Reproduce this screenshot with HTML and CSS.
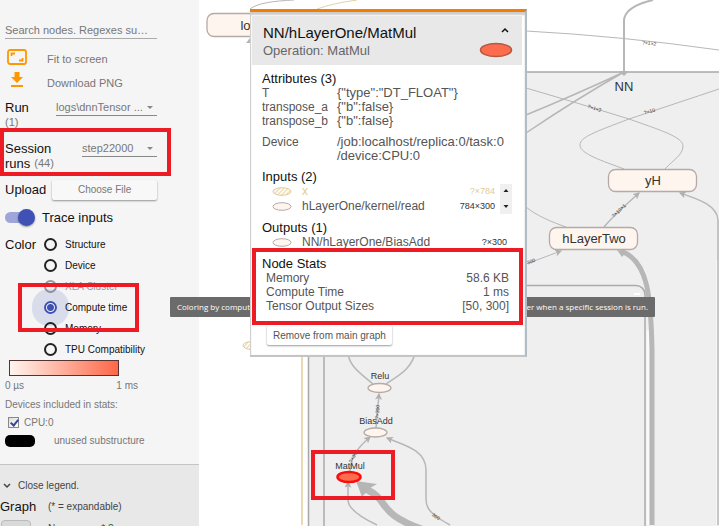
FILE: index.html
```html
<!DOCTYPE html>
<html lang="en">
<head>
<meta charset="utf-8">
<title>Graph explorer</title>
<link rel="stylesheet" href="styles.css">
</head>
<body>
<div class="app">
  <aside class="sidebar">
    <div class="controls">
      <input class="search" type="text" aria-label="Search nodes" placeholder="Search nodes. Regexes su…">
      <button class="action" type="button">
        <svg class="action-icon" viewBox="0 0 20 18" aria-hidden="true"><rect x="1" y="2" width="18" height="14" rx="2" fill="none" stroke="#ff9800" stroke-width="1.8"/><path d="M4.500 8V5.500H8M15.500 10V12.500H12" fill="none" stroke="#ff9800" stroke-width="1.800"/></svg>
        <span>Fit to screen</span>
      </button>
      <button class="action" type="button">
        <svg class="action-icon" viewBox="0 0 20 18" aria-hidden="true"><path d="M7.500 0h5v5h3.500l-6 6-6-6h3.500zM4 13h12v2H4z" fill="#ff9800"/></svg>
        <span>Download PNG</span>
      </button>
      <div class="pickers">
        <div class="picker">
          <label for="run"><span>Run</span><small>(1)</small></label>
          <span class="drop wide"><select id="run"><option>logs\dnnTensor ...</option></select></span>
        </div>
        <div class="picker">
          <label for="session"><span>Session</span><span class="second"><span>runs</span><small>(44)</small></span></label>
          <span class="drop"><select id="session"><option>step22000</option></select></span>
        </div>
      </div>
      <div class="upload"><span>Upload</span><button class="raised" type="button">Choose File</button></div>
      <label class="trace"><input class="toggle" type="checkbox" checked><span>Trace inputs</span></label>
      <div class="color">
        <span class="color-label">Color</span>
        <div class="radios">
          <label><input type="radio" name="color">Structure</label>
          <label><input type="radio" name="color">Device</label>
          <label class="off"><input type="radio" name="color" disabled>XLA Cluster</label>
          <label><input type="radio" name="color" checked>Compute time</label>
          <label><input type="radio" name="color">Memory</label>
          <label><input type="radio" name="color">TPU Compatibility</label>
        </div>
      </div>
      <div class="gradient"></div>
      <div class="scale"><span>0 µs</span><span>1 ms</span></div>
      <div class="devices">Devices included in stats:</div>
      <label class="device"><input type="checkbox" checked>CPU:0</label>
      <div class="unused"><i></i><span>unused substructure</span></div>
    </div>
    <div class="legend">
      <button class="close" type="button"><svg width="8" height="6" viewBox="0 0 8 6" aria-hidden="true"><path d="M1 1l3 3 3-3" fill="none" stroke="#444" stroke-width="1.500"/></svg>Close legend.</button>
      <div class="legend-row"><b>Graph</b><span>(* = expandable)</span></div>
      <div class="legend-row item"><i></i><span>Namespace* <a href="#help">?</a></span></div>
    </div>
  </aside>
  <main class="graph">
    <svg class="canvas" role="img" aria-label="Computation graph">
      <defs>
        <marker id="tip" viewBox="0 0 6 6" refX="5" refY="3" markerWidth="7" markerHeight="7" markerUnits="userSpaceOnUse" orient="auto"><path d="M0 0l6 3-6 3 1.500-3z" fill="#b0b0b0"/></marker>
        <pattern id="hatch" width="3" height="3" patternUnits="userSpaceOnUse" patternTransform="rotate(45)"><rect width="3" height="3" fill="#fffaf0"/><path d="M0 0v3" stroke="#dfcb9b" stroke-width="1.500"/></pattern>
      </defs>
      <g transform="translate(-199 0)">
        <rect x="308.500" y="72" width="412" height="480" fill="#efefef" stroke="#a8a8a8" stroke-width="1.500"/>
        <rect x="324" y="285.500" width="321" height="260" rx="9" fill="#efefef" stroke="#aaa" stroke-width="1.500"/>
        <path d="M648 330V525M717.500 260V525" stroke="#fafafa" stroke-width="2.500"/>
        <path d="M634 294h6" stroke="#fff" stroke-width="2"/>
        <path d="M302 350V525" stroke="#e5cd9c" stroke-width="1.500"/>
        <g fill="none" stroke="#b7b7b7" stroke-width="1">
          <path d="M250 9C258 3 273 1 294 0"/>
          <path d="M317 9Q334 3 357 0" stroke="#e2d2a8"/>
          <path d="M526 31Q620 36 719 50"/>
          <path d="M526 88Q578 103 629 119C660 130 683 137 683 146C683 155 673 160 665 169"/>
          <path d="M719 89Q680 102 629 119C595 132 580 137 580 145C580 154 603 161 624 169"/>
          <path d="M526 207C537 216 552 222 566 227"/>
          <path d="M526 264L561 251" marker-end="url(#tip)"/>
          <path d="M604 227Q613 216 639 193" stroke-width="1.500" marker-end="url(#tip)"/>
          <path d="M718 525V220C717 204 694 198 680 193" stroke-width="1.500" marker-end="url(#tip)"/>
          <path d="M526 115Q577 94 624 72M526 133Q578 98 624 72" stroke-width="1.500"/>
          <path d="M653 0C636 4 624 11 624 21V73" stroke-width="2"/>
          <path d="M652 525V350C651 300 649 261 621 251" stroke-width="5"/>
          <path d="M348 350C347 366 363 375 373 384M416 350C412 370 397 376 386 384" stroke-width="1.500"/>
          <path d="M376 428L379 394" stroke-width="1.500" marker-end="url(#tip)"/>
          <path d="M350 471C351 454 361 445 370 437" stroke-width="1.500" marker-end="url(#tip)"/>
          <path d="M450 525Q441 520 437 517C428 510 426 506 426 499V470C426 450 404 445 387 438" stroke-width="1.500" marker-end="url(#tip)"/>
          <path d="M377 525C358 516 348 508 348 500V482" stroke-width="1.500" marker-end="url(#tip)"/>
          <path d="M424 530C374 512 392 502 366 489" stroke-width="7"/>
        </g>
        <path d="M356 481L377 484L370 488L362 497ZM617 250L627 251L622 257ZM246 43L250 38V43ZM619 71h10l-5 5z" fill="#b5b5b5"/>
        <g fill="#fff5ef" stroke="#b5aaa6" stroke-width="1.300">
          <rect x="207" y="13.500" width="89" height="23" rx="7"/>
          <rect x="608.500" y="169.500" width="88" height="22" rx="7"/>
          <rect x="549.500" y="227.500" width="88" height="22" rx="7"/>
          <ellipse cx="379.500" cy="388" rx="11.500" ry="4.500"/>
          <ellipse cx="375.500" cy="432.500" rx="11.500" ry="4.500"/>
        </g>
        <ellipse cx="252" cy="345.500" rx="9" ry="4" fill="url(#hatch)" stroke="#dfcb9b"/>
        <ellipse cx="349" cy="477" rx="11.500" ry="5" fill="#fc6d4d" stroke="#fa0d0d" stroke-width="2.500"/>
        <g class="name"><text x="252" y="30">loss</text><text x="624" y="91">NN</text><text x="653" y="185">yH</text><text x="594" y="243">hLayerTwo</text></g>
        <g class="op"><text x="380" y="379">Relu</text><text x="376" y="424">BiasAdd</text><text x="350" y="469">MatMul</text></g>
        <g class="size">
          <text transform="translate(649 45) rotate(7)">?×1×2</text>
          <text transform="translate(594 110) rotate(18)">?×1×2</text>
          <text transform="translate(650 113) rotate(-16)">?×10</text>
          <text transform="translate(620 212) rotate(-43)">?×10×1</text>
          <text transform="translate(529 264) rotate(-20)">?×300</text>
          <text transform="translate(379 412) rotate(-85)">?×300</text>
          <text transform="translate(355 457) rotate(-62)">?×300</text>
          <text transform="translate(435 518) rotate(35)">300</text>
        </g>
      </g>
    </svg>
  </main>

  <div class="tooltip" role="tooltip"><span>Coloring by comput</span><span>er when a specific session is run.</span></div>

  <section class="card">
    <header class="card-head">
      <div><h1>NN/hLayerOne/MatMul</h1><p>Operation: MatMul</p></div>
      <div class="head-side">
        <button class="collapse" type="button" aria-label="Collapse"><svg width="10" height="7" viewBox="0 0 10 7"><path d="M2 5l3-3 3 3" fill="none" stroke="#111" stroke-width="1.500"/></svg></button>
        <svg width="34" height="16" viewBox="0 0 34 16" aria-hidden="true"><ellipse cx="17" cy="8" rx="15.500" ry="6.500" fill="#fd6c4c" stroke="#b75743" stroke-width="1.500"/></svg>
      </div>
    </header>
    <div class="card-body">
      <h2>Attributes (3)</h2>
      <dl class="attrs">
        <dt>T</dt><dd>{"type":"DT_FLOAT"}</dd>
        <dt>transpose_a</dt><dd>{"b":false}</dd>
        <dt>transpose_b</dt><dd>{"b":false}</dd>
      </dl>
      <dl class="attrs device-attr"><dt>Device</dt><dd>/job:localhost/replica:0/task:0<wbr>/device:CPU:0</dd></dl>
      <h2>Inputs (2)</h2>
      <div class="inputs">
        <ul>
          <li class="faded"><svg width="20" height="9" viewBox="0 0 20 9"><ellipse cx="10" cy="4.500" rx="9" ry="3.800" fill="url(#hatch)" stroke="#dfcb9b"/></svg><span>x</span><small>?×784</small></li>
          <li><svg width="20" height="9" viewBox="0 0 20 9"><ellipse cx="10" cy="4.500" rx="9" ry="3.800" fill="#fff5ef" stroke="#b5aaa6"/></svg><span>hLayerOne/kernel/read</span><small>784×300</small></li>
        </ul>
        <div class="scroller" aria-hidden="true"><svg width="12" height="29" viewBox="0 0 12 29"><path d="M3.500 8L6 5l2.500 3zM3.500 21h5L6 24z" fill="#222"/></svg></div>
      </div>
      <h2 class="next">Outputs (1)</h2>
      <ul>
        <li><svg width="20" height="9" viewBox="0 0 20 9"><ellipse cx="10" cy="4.500" rx="9" ry="3.800" fill="#fff5ef" stroke="#b5aaa6"/></svg><span>NN/hLayerOne/BiasAdd</span><small>?×300</small></li>
      </ul>
      <h2 class="next">Node Stats</h2>
      <table class="stats">
        <tr><th>Memory</th><td>58.6 KB</td></tr>
        <tr><th>Compute Time</th><td>1 ms</td></tr>
        <tr><th>Tensor Output Sizes</th><td>[50, 300]</td></tr>
      </table>
      <button class="raised remove" type="button">Remove from main graph</button>
    </div>
  </section>

  <div class="mark mark-session"></div>
  <div class="mark mark-compute"></div>
  <div class="mark mark-stats"></div>
  <div class="mark mark-node"></div>
</div>
</body>
</html>
```
FILE: styles.css
```css
* { box-sizing: border-box; }
body { margin: 0; background: #fff; color: #111; font: 13px/15px "Liberation Sans", Arial, sans-serif; }
h1, h2, p, dl, dd, ul { margin: 0; padding: 0; font-weight: normal; }
button, input, select { font: inherit; color: inherit; margin: 0; }
button { border: 0; padding: 0; background: none; text-align: left; }
svg { flex: none; display: block; }

.app { position: relative; display: flex; height: calc(100vh - 4px); margin-right: 5px; overflow: hidden; }

.sidebar { flex: none; width: 199px; background: #f5f5f5; overflow: hidden; }
.controls { padding: 20px 42px 16px 5px; }
.search { display: block; width: 100%; height: 19px; margin-bottom: 9px; padding: 2px 0 0; border: 0; border-bottom: 1px solid #aaa; background: none; font-size: 11px; text-overflow: ellipsis; }
.search::placeholder { color: #777; opacity: 1; }
.action { display: flex; gap: 20px; width: 100%; height: 24px; color: #777; font-size: 11px; }
.action-icon { width: 20px; height: 18px; margin-left: 2px; }
.action span { padding-top: 4px; }

.pickers { display: flex; flex-direction: column; gap: 11px; margin-top: 4px; }
.picker { display: flex; justify-content: space-between; height: 30px; }
.picker label { display: flex; flex-direction: column; }
.second { display: flex; gap: 4px; }
.picker small { font-size: 11px; color: #777; }
.drop { position: relative; width: 75px; height: 16px; border-bottom: 1px solid #888; }
.drop.wide { width: 101px; }
.drop::after { content: ""; position: absolute; right: 4px; top: 6px; border: 3px solid transparent; border-top-color: #888; border-bottom: 0; }
.drop select { appearance: none; display: block; width: 100%; height: 15px; padding: 0; border: 0; background: none; font-size: 11px; color: #777; }

.upload { display: flex; align-items: center; gap: 6px; height: 21px; margin-top: 8px; }
.raised { height: 20px; background: #f8f8f8; border-radius: 2px; box-shadow: 0 1px 2px rgba(0,0,0,.4); color: #777; font-size: 10px; text-align: center; }
.upload .raised { flex: 1; }
.trace { display: flex; align-items: center; gap: 8px; height: 20px; margin-top: 7px; }
.toggle { appearance: none; position: relative; width: 29px; height: 11px; border-radius: 6px; background: #9ea6d9; }
.toggle::after { content: ""; position: absolute; right: -1px; top: -3px; width: 17px; height: 17px; border-radius: 50%; background: #3f51b5; box-shadow: 0 1px 2px rgba(0,0,0,.4); }

.color { display: flex; margin-top: 7px; }
.color-label { width: 39px; line-height: 21px; }
.radios label { display: flex; align-items: center; gap: 8px; height: 21px; font-size: 10px; white-space: nowrap; }
.radios .off { color: #999; }
.radios input { appearance: none; flex: none; width: 13px; height: 13px; border: 2px solid #222; border-radius: 50%; }
.radios .off input { border-color: #999; }
.radios input:checked { border-color: #3f51b5; background: radial-gradient(circle, #3f51b5 3px, transparent 4px); box-shadow: 0 0 0 12px rgba(63,81,181,.15); }

.gradient { width: 110px; height: 16px; margin-left: 4px; border: 1px solid #533; background: linear-gradient(to right, #fff5ef, #fd6747); }
.scale, .devices, .device, .unused { color: #777; font-size: 10px; }
.scale { display: flex; justify-content: space-between; width: 133px; margin-top: 2px; }
.devices { margin-top: 4px; }
.device { display: flex; align-items: center; gap: 5px; margin: 3px 0 3px 3px; }
.device input { appearance: none; width: 11px; height: 11px; border: 1px solid #888; background: linear-gradient(135deg, #ddd, #fff); position: relative; }
.device input::after { content: ""; position: absolute; left: 3px; top: 0; width: 3px; height: 6px; border: solid #34469b; border-width: 0 2px 2px 0; transform: rotate(40deg); }
.unused { display: flex; align-items: center; gap: 19px; height: 15px; }
.unused i { width: 30px; height: 12px; border-radius: 5px; background: #000; }

.legend { height: 80px; padding-top: 13px; border-top: 1px solid #c4c4c4; background: #e8e8e8; font-size: 10px; color: #444; }
.close { display: flex; align-items: center; gap: 7px; padding-left: 3px; }
.legend-row { display: flex; align-items: center; gap: 12px; margin-top: 6px; }
.legend-row b { width: 36px; font-size: 13px; font-weight: normal; color: #111; }
.legend-row i { width: 30px; height: 16px; margin-left: 1px; border: 1px solid #bbb; border-radius: 4px; background: #d9d9d9; }
.item { gap: 17px; }
.item a { color: #2a7a2a; text-decoration: none; }

.graph { flex: 1; min-width: 0; background: #fff; }
.canvas { width: 100%; height: 100%; }
.canvas text { text-anchor: middle; fill: #333; }
.name { font-size: 13px; }
.op { font-size: 9px; }
.size { font-size: 5px; }

.tooltip { position: absolute; left: 170px; top: 297px; width: 485px; height: 20px; padding: 0 7px; display: flex; justify-content: space-between; align-items: center; border-radius: 1px; background: #6b6b6b; color: #fff; font: 8px/12px "Open Sans", sans-serif; }

.card { position: absolute; left: 250px; top: 9px; width: 277px; padding: 0 3px 10px 2px; border-top: 3px solid #f57c00; border-right: 2px solid #b0bcc6; border-bottom: 2px solid #c4c4c4; background: #fff; box-shadow: inset 0 3px 2px #ccc, inset 1px 0 1px #ccc; }
.card-head { display: flex; justify-content: space-between; height: 49px; margin-top: 4px; padding: 8px 9px 0 11px; background: #e8e8e8; }
.card-head h1 { font-size: 15px; line-height: 18px; }
.card-head p { line-height: 17px; color: #666; }
.head-side { display: flex; flex-direction: column; align-items: flex-end; gap: 8px; padding-top: 3px; }
.collapse { margin-right: 3px; }
.card-body { padding: 7px 10px 0; color: #555; }
.card-body h2 { font-size: 13px; line-height: 14px; color: #111; }
.attrs { display: grid; grid-template-columns: 75px 1fr; line-height: 14px; }
.attrs dt { font-size: 12px; }
.attrs dd { overflow-wrap: anywhere; }
.device-attr { margin: 7px 0; }
.card-body ul { flex: 1; list-style: none; font-size: 12px; }
.card-body li { display: flex; align-items: center; gap: 10px; height: 15px; padding-left: 10px; padding-right: 5px; }
.card-body li small { margin-left: auto; font-size: 9px; color: #333; }
.card-body .faded, .card-body .faded small { color: #dfcb9b; }
.inputs { display: flex; }
.scroller { background: #f0f0f0; }
.card-body .next { margin-top: 7px; }
.stats { width: calc(100% - 7px); margin-left: 4px; border-collapse: collapse; font-size: 12px; line-height: 14px; }
.stats th, .stats td { padding: 0; font-weight: normal; text-align: left; }
.stats td { text-align: right; }
.remove { margin: 12px 0 0 5px; padding: 0 6px; background: #fff; color: #555; }

.mark { position: absolute; border: 4px solid #ed1c24; }
.mark-session { left: 0; top: 128px; width: 171px; height: 48px; }
.mark-compute { left: 18px; top: 283px; width: 121px; height: 49px; }
.mark-stats { left: 252px; top: 248px; width: 271px; height: 77px; }
.mark-node { left: 311px; top: 450px; width: 84px; height: 50px; }
```
